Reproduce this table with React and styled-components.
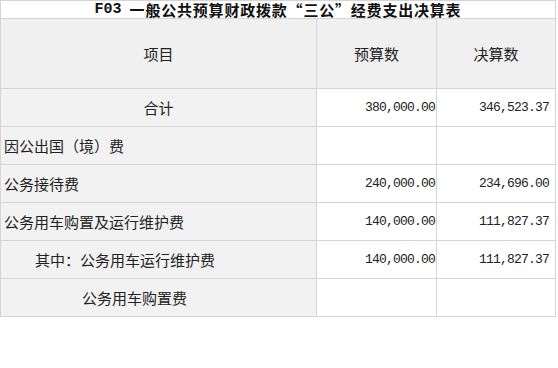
import React from "react";
import styled, { createGlobalStyle } from "styled-components";

const Global = createGlobalStyle`
  html, body { margin: 0; padding: 0; background: #fff; }
  body { font-family: "Noto Sans CJK SC", "Liberation Sans", sans-serif; }
`;

const Grid = styled.div`
  display: grid;
  grid-template-columns: 315px 119px 118px;
  grid-template-rows: 17px 69px repeat(6, 37px);
  gap: 1px;
  padding: 1px;
  width: max-content;
  background: #d4d4d4;
`;

const Title = styled.div`
  grid-column: 1 / -1;
  background: #fff;
  display: flex;
  align-items: center;
  justify-content: center;
  font-size: 15px;
  letter-spacing: 0.8px;
  font-weight: 700;
  line-height: 17px;
  color: #111;
  white-space: nowrap;
  overflow: visible;
`;

const Code = styled.span`
  font-family: "Liberation Mono", monospace;
  font-weight: 700;
  letter-spacing: 0;
  margin-right: 8px;
`;

const Head = styled.div`
  background: #f0f0f0;
  display: flex;
  align-items: center;
  justify-content: center;
  font-size: 15px;
  color: #222;
`;

const Label = styled.div`
  background: #f2f2f2;
  display: flex;
  align-items: center;
  justify-content: ${(p) => (p.$center ? "center" : "flex-start")};
  padding-left: ${(p) => (p.$center ? 0 : p.$indent ?? 3)}px;
  font-size: 15px;
  color: #222;
  white-space: nowrap;
`;

const Num = styled.div`
  background: #fff;
  display: flex;
  align-items: center;
  justify-content: flex-end;
  padding-right: ${(p) => p.$pr}px;
  font-family: "Liberation Mono", monospace;
  font-size: 13px;
  letter-spacing: -0.8px;
  color: #222;
`;

const rows = [
  { label: "合计", center: true, a: "380,000.00", b: "346,523.37" },
  { label: "因公出国（境）费", a: "", b: "" },
  { label: "公务接待费", a: "240,000.00", b: "234,696.00" },
  { label: "公务用车购置及运行维护费", a: "140,000.00", b: "111,827.37" },
  { label: "其中：公务用车运行维护费", indent: 34, a: "140,000.00", b: "111,827.37" },
  { label: "公务用车购置费", indent: 81, a: "", b: "" },
];

export default function App() {
  return (
    <>
      <Global />
      <Grid>
        <Title>
          <Code>F03</Code>一般公共预算财政拨款“三公”经费支出决算表
        </Title>
        <Head>项目</Head>
        <Head>预算数</Head>
        <Head>决算数</Head>
        {rows.map((r, i) => (
          <React.Fragment key={i}>
            <Label $center={r.center} $indent={r.indent}>{r.label}</Label>
            <Num $pr={1}>{r.a}</Num>
            <Num $pr={6}>{r.b}</Num>
          </React.Fragment>
        ))}
      </Grid>
    </>
  );
}
